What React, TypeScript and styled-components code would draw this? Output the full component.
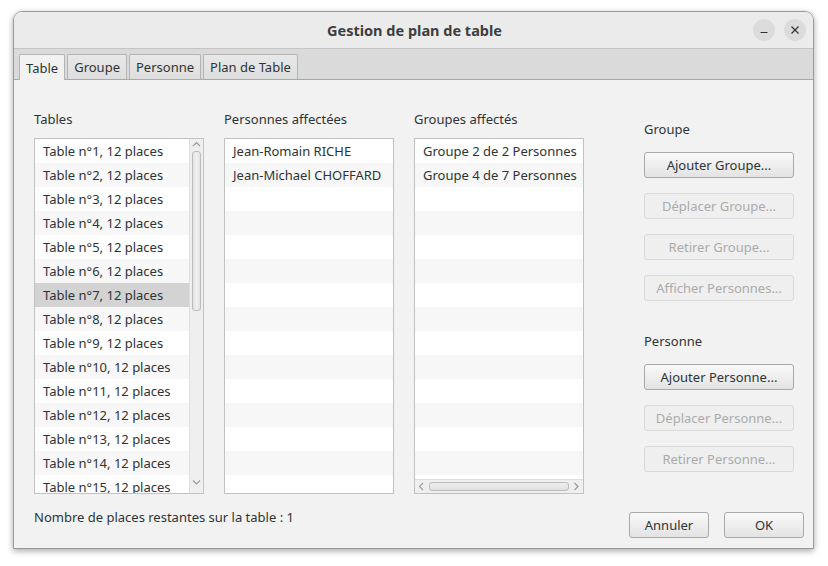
import React from 'react';
import styled, { createGlobalStyle } from 'styled-components';

const GlobalStyle = createGlobalStyle`
  html, body {
    margin: 0;
    padding: 0;
    background: #ffffff;
  }
  body {
    font-family: "Noto Sans", "Open Sans", sans-serif;
    font-size: 13px;
    color: #2e3436;
  }
`;

const Page = styled.div`
  width: 828px;
  height: 566px;
  padding: 11px 0 0 13px;
  box-sizing: border-box;
`;

const Window = styled.div`
  width: 801px;
  height: 538px;
  box-sizing: border-box;
  border: 1px solid #9a9a9a;
  border-radius: 9px 9px 0 0;
  background: #f2f2f2;
  display: flex;
  flex-direction: column;
  overflow: hidden;
  box-shadow: 0 2px 6px rgba(0, 0, 0, 0.35);
`;

const TitleBar = styled.div`
  height: 36px;
  flex-shrink: 0;
  background: #ebebeb;
  border-bottom: 1px solid #c4c4c4;
  display: flex;
  align-items: center;
  justify-content: center;
  position: relative;
`;

const Title = styled.div`
  font-family: "Noto Sans", sans-serif;
  font-weight: 700;
  font-size: 14.5px;
  color: #3d3d3d;
  margin-left: 2px;
`;

const TitleButtons = styled.div`
  position: absolute;
  right: 7px;
  top: 7px;
  display: flex;
  gap: 9px;
`;

const RoundButton = styled.div`
  width: 22px;
  height: 22px;
  border-radius: 50%;
  background: #dcdcdc;
  display: flex;
  align-items: center;
  justify-content: center;
`;

const TabBar = styled.div`
  height: 30px;
  flex-shrink: 0;
  background: #dadada;
  border-bottom: 1px solid #a9a9a9;
  display: flex;
  align-items: flex-end;
  padding-left: 5px;
  gap: 2px;
`;

const Tab = styled.div<{ $active?: boolean }>`
  height: ${p => (p.$active ? 26 : 25)}px;
  box-sizing: border-box;
  padding: 0 6px;
  display: flex;
  align-items: center;
  border: 1px solid #b4b4b4;
  border-bottom: none;
  border-radius: 2px 2px 0 0;
  background: ${p => (p.$active ? '#f2f2f2' : 'linear-gradient(#e8e8e8, #dedede)')};
  color: #2e3436;
  margin-bottom: ${p => (p.$active ? -1 : 0)}px;
  ${p => p.$active && 'padding-top: 1px;'}
`;

const Body = styled.div`
  flex: 1;
  display: flex;
  padding: 0 9px 10px 20px;
`;

const Left = styled.div`
  display: flex;
  flex-direction: column;
`;

const Columns = styled.div`
  display: flex;
  gap: 20px;
  padding-top: 30px;
`;

const Column = styled.div`
  width: 170px;
  display: flex;
  flex-direction: column;
`;

const Label = styled.div`
  height: 18px;
  line-height: 18px;
  margin-bottom: 10px;
  color: #2e3436;
`;

const ListBox = styled.div`
  height: 356px;
  box-sizing: border-box;
  border: 1px solid #c2c2c2;
  background: #ffffff;
  display: flex;
  overflow: hidden;
`;

const ListArea = styled.div`
  flex: 1;
  display: flex;
  flex-direction: column;
  min-width: 0;
`;

const Rows = styled.div`
  flex: 1;
  overflow: hidden;
`;

const Row = styled.div<{ $alt: boolean; $selected?: boolean }>`
  height: 24px;
  line-height: 24px;
  padding-left: 8px;
  white-space: nowrap;
  background: ${p => (p.$selected ? '#d3d3d3' : p.$alt ? '#f7f7f7' : '#ffffff')};
`;

const VScroll = styled.div`
  width: 14px;
  flex-shrink: 0;
  background: #efefef;
  border-left: 1px solid #dedede;
  display: flex;
  flex-direction: column;
  align-items: center;
  padding-top: 2px;
  box-sizing: border-box;
`;

const VThumb = styled.div`
  width: 9px;
  height: 160px;
  margin-top: 3px;
  box-sizing: border-box;
  border: 1px solid #bcbcbc;
  border-radius: 3px;
  background: linear-gradient(90deg, #e2e2e2, #f0f0f0 50%, #e2e2e2);
`;

const ScrollSpacer = styled.div`
  flex: 1;
`;

const ArrowSlot = styled.div`
  margin-bottom: 3px;
`;

const HScroll = styled.div`
  height: 14px;
  flex-shrink: 0;
  background: #efefef;
  border-top: 1px solid #dedede;
  display: flex;
  align-items: center;
  padding: 0 3px;
  box-sizing: border-box;
  gap: 4px;
`;

const HThumb = styled.div`
  flex: 1;
  height: 9px;
  box-sizing: border-box;
  border: 1px solid #bcbcbc;
  border-radius: 3px;
  background: linear-gradient(#eeeeee, #e0e0e0);
`;

const Footer = styled.div`
  margin-top: 14px;
  line-height: 18px;
`;

const Right = styled.div`
  width: 175px;
  margin-left: 45px;
  display: flex;
  flex-direction: column;
`;

const Section = styled.div<{ $top: number }>`
  padding-left: 15px;
  padding-top: ${p => p.$top}px;
  display: flex;
  flex-direction: column;
  gap: 15px;
`;

const SectionLabel = styled.div`
  line-height: 18px;
  margin-bottom: -1px;
`;

const Button = styled.div<{ $disabled?: boolean; $width?: number }>`
  width: ${p => p.$width ?? 150}px;
  height: 26px;
  box-sizing: border-box;
  display: flex;
  align-items: center;
  justify-content: center;
  border-radius: 3px;
  border: 1px solid ${p => (p.$disabled ? '#dadada' : '#a9a9a9')};
  background: ${p => (p.$disabled ? '#efefef' : 'linear-gradient(#f9f9f9, #e3e3e3)')};
  color: ${p => (p.$disabled ? '#ababab' : '#2e3436')};
  white-space: nowrap;
`;

const Actions = styled.div`
  margin-top: auto;
  display: flex;
  justify-content: space-between;
`;

const Chevron = ({ dir }: { dir: 'up' | 'down' | 'left' | 'right' }) => {
  const paths = {
    up: 'M1 5 L4.5 1.5 L8 5',
    down: 'M1 1.5 L4.5 5 L8 1.5',
    left: 'M5 1 L1.5 4.5 L5 8',
    right: 'M1.5 1 L5 4.5 L1.5 8',
  };
  const horizontal = dir === 'left' || dir === 'right';
  return (
    <svg width={horizontal ? 7 : 9} height={horizontal ? 9 : 7} viewBox={horizontal ? '0 0 7 9' : '0 0 9 7'}>
      <path d={paths[dir]} fill="none" stroke="#9a9a9a" strokeWidth="1.1" />
    </svg>
  );
};

const tables = Array.from({ length: 15 }, (_, i) => `Table n°${i + 1}, 12 places`);
const persons = ['Jean-Romain RICHE', 'Jean-Michael CHOFFARD'];
const groups = ['Groupe 2 de 2 Personnes', 'Groupe 4 de 7 Personnes'];

const fill = (items: string[], n: number) =>
  Array.from({ length: n }, (_, i) => items[i] ?? '');

const App: React.FC = () => (
  <Page>
    <GlobalStyle />
    <Window>
      <TitleBar>
        <Title>Gestion de plan de table</Title>
        <TitleButtons>
          <RoundButton>
            <svg width="10" height="10" viewBox="0 0 10 10">
              <path d="M1.5 7.5 H8.5" stroke="#333" strokeWidth="1.2" />
            </svg>
          </RoundButton>
          <RoundButton>
            <svg width="10" height="10" viewBox="0 0 10 10">
              <path d="M1.5 1.5 L8.5 8.5 M8.5 1.5 L1.5 8.5" stroke="#333" strokeWidth="1.2" />
            </svg>
          </RoundButton>
        </TitleButtons>
      </TitleBar>
      <TabBar>
        <Tab $active>Table</Tab>
        <Tab>Groupe</Tab>
        <Tab>Personne</Tab>
        <Tab>Plan de Table</Tab>
      </TabBar>
      <Body>
        <Left>
          <Columns>
            <Column>
              <Label>Tables</Label>
              <ListBox>
                <ListArea>
                  <Rows>
                    {tables.map((t, i) => (
                      <Row key={t} $alt={i % 2 === 1} $selected={i === 6}>{t}</Row>
                    ))}
                  </Rows>
                </ListArea>
                <VScroll>
                  <Chevron dir="up" />
                  <VThumb />
                  <ScrollSpacer />
                  <ArrowSlot>
                    <Chevron dir="down" />
                  </ArrowSlot>
                </VScroll>
              </ListBox>
            </Column>
            <Column>
              <Label>Personnes affectées</Label>
              <ListBox>
                <ListArea>
                  <Rows>
                    {fill(persons, 15).map((t, i) => (
                      <Row key={i} $alt={i % 2 === 1}>{t}</Row>
                    ))}
                  </Rows>
                </ListArea>
              </ListBox>
            </Column>
            <Column>
              <Label>Groupes affectés</Label>
              <ListBox>
                <ListArea>
                  <Rows>
                    {fill(groups, 15).map((t, i) => (
                      <Row key={i} $alt={i % 2 === 1}>{t}</Row>
                    ))}
                  </Rows>
                  <HScroll>
                    <Chevron dir="left" />
                    <HThumb />
                    <Chevron dir="right" />
                  </HScroll>
                </ListArea>
              </ListBox>
            </Column>
          </Columns>
          <Footer>Nombre de places restantes sur la table : 1</Footer>
        </Left>
        <Right>
          <Section $top={40}>
            <SectionLabel>Groupe</SectionLabel>
            <Button>Ajouter Groupe...</Button>
            <Button $disabled>Déplacer Groupe...</Button>
            <Button $disabled>Retirer Groupe...</Button>
            <Button $disabled>Afficher Personnes...</Button>
          </Section>
          <Section $top={31}>
            <SectionLabel>Personne</SectionLabel>
            <Button>Ajouter Personne...</Button>
            <Button $disabled>Déplacer Personne...</Button>
            <Button $disabled>Retirer Personne...</Button>
          </Section>
          <Actions>
            <Button $width={80}>Annuler</Button>
            <Button $width={80}>OK</Button>
          </Actions>
        </Right>
      </Body>
    </Window>
  </Page>
);

export default App;
